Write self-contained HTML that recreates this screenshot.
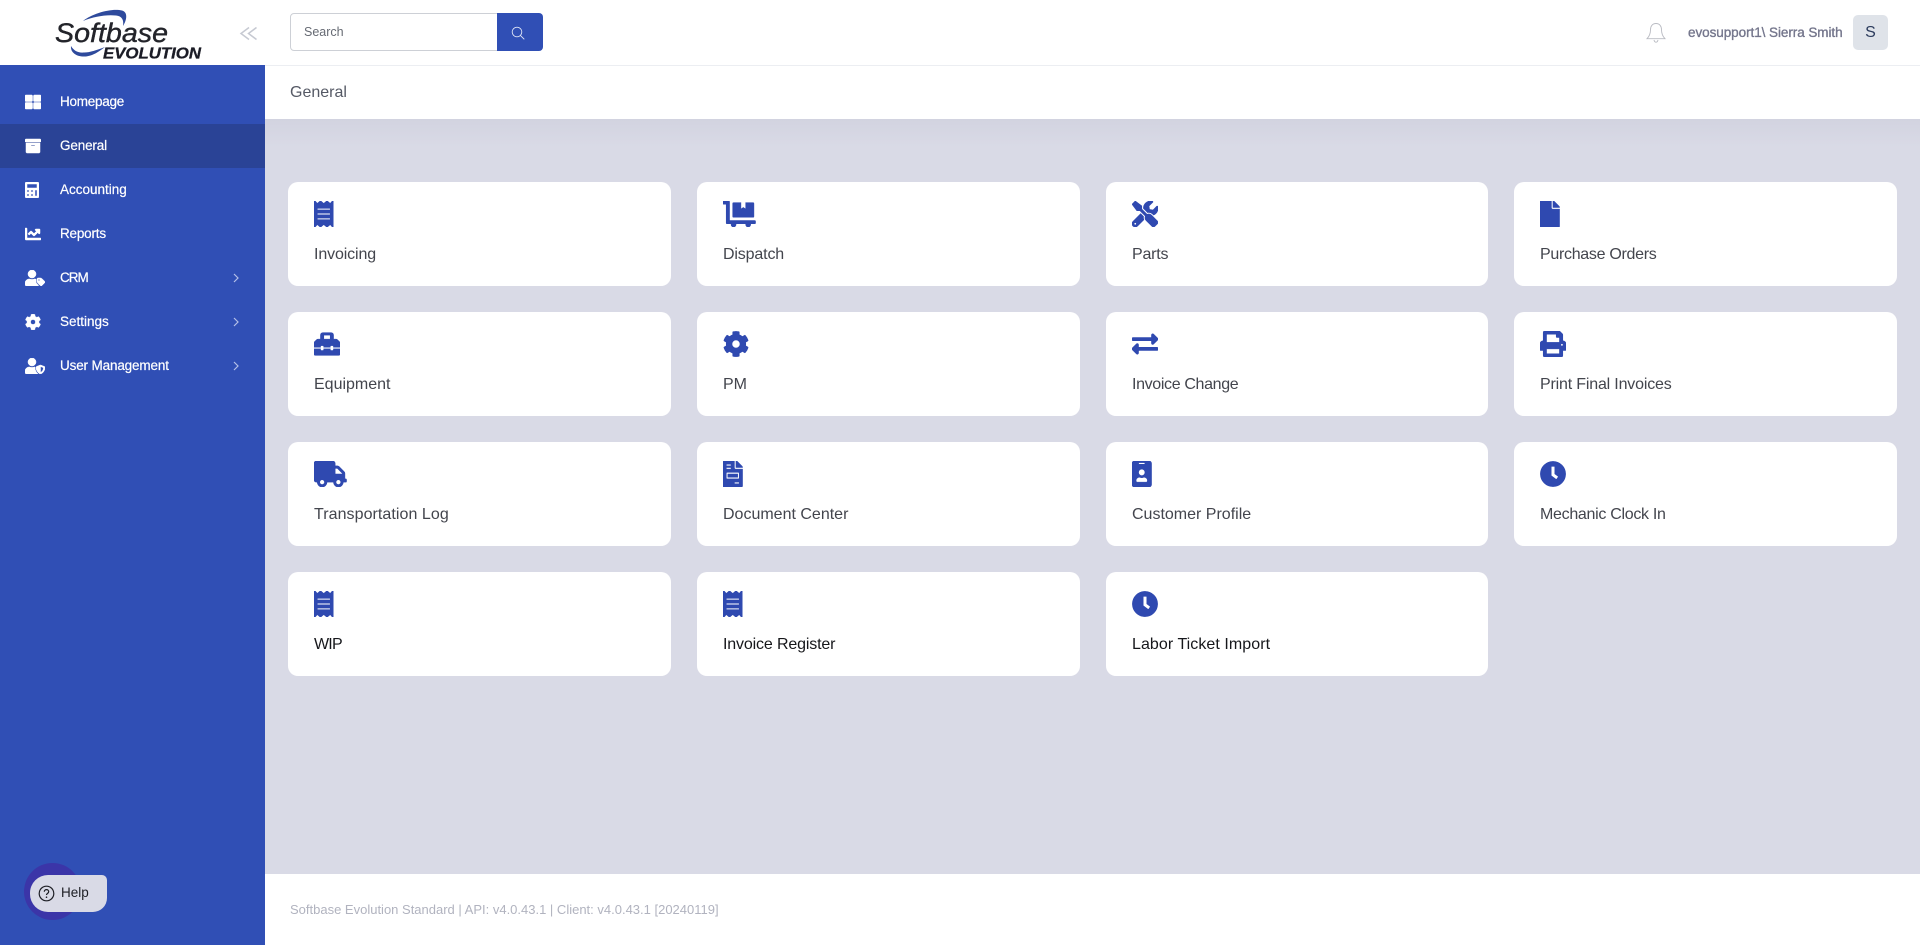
<!DOCTYPE html>
<html lang="en">
<head>
<meta charset="utf-8">
<title>Softbase Evolution - General</title>
<style>
html,body{margin:0;padding:0;width:1920px;height:945px;overflow:hidden;background:#d9dae6;font-family:"Liberation Sans",sans-serif}
*{box-sizing:border-box}
.abs{position:absolute}
#side{position:absolute;left:0;top:65px;width:265px;height:880px;background:#304fb5}
#logo{position:absolute;left:0;top:0;width:265px;height:65px;background:#fff}
#top{position:absolute;left:265px;top:0;width:1655px;height:66px;background:#fff;border-bottom:1px solid #eceef2}
#ph{position:absolute;left:265px;top:66px;width:1655px;height:53px;background:#fff}
#ph span{position:absolute;left:25px;top:17px;font-size:16px;line-height:20px;color:#555965}
#shade{position:absolute;left:265px;top:119px;width:1655px;height:28px;background:linear-gradient(#d2d3e0,#d9dae6)}
#foot{position:absolute;left:265px;top:874px;width:1655px;height:71px;background:#fff}
#foot span{position:absolute;left:25px;top:27px;font-size:13px;line-height:18px;color:#b1b3bf;white-space:nowrap}
.nav{position:absolute;left:0;width:265px;height:44px;color:#fff;font-size:13.5px;line-height:44px}
.nav.on{background:#2a4396}
.nav span{position:absolute;left:60px;top:0;-webkit-text-stroke:.2px #fff}
.nav svg.i{position:absolute;left:25px;top:14px;height:16px;fill:#fff;stroke:#fff;stroke-width:16}
.nav svg.c{position:absolute;left:233px;top:17px;width:6px;height:10px;fill:none;stroke:#b4c0e8;stroke-width:1.2}
.card{position:absolute;width:383px;height:104px;background:#fff;border-radius:10px}
.card svg{position:absolute;left:26px;top:19px;height:26px;fill:#2f49b0;stroke:#2f49b0;stroke-width:12}
.card span{position:absolute;left:26px;top:63px;font-size:16px;line-height:20px;color:#43454d;white-space:nowrap}
.card.d span{color:#16171b}
</style>
</head>
<body>
<svg width="0" height="0" style="position:absolute">
<defs>
<symbol id="receipt" viewBox="0 0 384 512"><path d="M358.4 3.2L320 48 265.6 3.2a15.9 15.9 0 0 0-19.2 0L192 48 137.6 3.2a15.9 15.9 0 0 0-19.2 0L64 48 25.6 3.2C15-4.7 0 2.8 0 16v480c0 13.2 15 20.7 25.6 12.8L64 464l54.4 44.8a15.9 15.9 0 0 0 19.2 0L192 464l54.4 44.8a15.9 15.9 0 0 0 19.2 0L320 464l38.4 44.8c10.5 7.9 25.6.4 25.6-12.8V16c0-13.2-15-20.7-25.6-12.8zM320 360c0 4.4-3.6 8-8 8H72c-4.4 0-8-3.6-8-8v-16c0-4.4 3.6-8 8-8h240c4.4 0 8 3.6 8 8v16zm0-96c0 4.4-3.6 8-8 8H72c-4.4 0-8-3.6-8-8v-16c0-4.4 3.6-8 8-8h240c4.4 0 8 3.6 8 8v16zm0-96c0 4.4-3.6 8-8 8H72c-4.4 0-8-3.6-8-8v-16c0-4.4 3.6-8 8-8h240c4.4 0 8 3.6 8 8v16z"/></symbol>
<symbol id="clock" viewBox="0 0 512 512"><path d="M256 8C119 8 8 119 8 256s111 248 248 248 248-111 248-248S393 8 256 8zm57.1 350.1L224.9 294c-3.1-2.3-4.9-5.9-4.9-9.7V116c0-6.6 5.4-12 12-12h48c6.6 0 12 5.4 12 12v137.7l63.5 46.2c5.4 3.9 6.5 11.4 2.6 16.8l-28.2 38.8c-3.9 5.3-11.4 6.5-16.8 2.6z"/></symbol>
<symbol id="cog" viewBox="0 0 512 512"><path d="M487.4 315.7l-42.6-24.6c4.3-23.2 4.3-47 0-70.2l42.6-24.6c4.9-2.8 7.1-8.6 5.5-14-11.1-35.6-30-67.8-54.7-94.6-3.8-4.1-10-5.1-14.8-2.3L380.8 110c-17.9-15.4-38.5-27.3-60.8-35.1V25.8c0-5.6-3.9-10.5-9.4-11.7-36.7-8.2-74.3-7.8-109.2 0-5.5 1.2-9.4 6.1-9.4 11.7V75c-22.2 7.9-42.8 19.8-60.8 35.1L88.7 85.5c-4.9-2.8-11-1.9-14.8 2.3-24.7 26.7-43.6 58.9-54.7 94.6-1.7 5.4.6 11.2 5.5 14L67.3 221c-4.3 23.2-4.3 47 0 70.2l-42.6 24.6c-4.9 2.8-7.1 8.6-5.5 14 11.1 35.6 30 67.8 54.7 94.6 3.8 4.1 10 5.1 14.8 2.3l42.6-24.6c17.9 15.4 38.5 27.3 60.8 35.1v49.2c0 5.6 3.9 10.5 9.4 11.7 36.7 8.2 74.3 7.8 109.2 0 5.5-1.2 9.4-6.1 9.4-11.7v-49.2c22.2-7.9 42.8-19.8 60.8-35.1l42.6 24.6c4.9 2.8 11 1.9 14.8-2.3 24.7-26.7 43.6-58.9 54.7-94.6 1.5-5.5-.7-11.3-5.6-14.1zM256 336c-44.1 0-80-35.9-80-80s35.9-80 80-80 80 35.9 80 80-35.9 80-80 80z"/></symbol>
</defs>
</svg>

<div id="top"></div>
<div id="ph"><span>General</span></div>
<div id="shade"></div>

<!-- logo -->
<div id="logo">
<svg width="265" height="65" viewBox="0 0 265 65" style="position:absolute;left:0;top:0">
<path d="M83 21C93 13 112 8 122 10.500C128 12 127 20 123 26C124 20 122 16 116 15.500C106 14.500 94 16.500 83 21Z" fill="#2e4a9c"/>
<path d="M71 46C70 55 82 59 92 55C97 53 101 50 105 47C97 50 90 52.500 84 52.500C78 53 74 51 71 46Z" fill="#2e4a9c"/>
<text x="55" y="42" font-family="'Liberation Sans',sans-serif" font-style="italic" font-size="26.500" fill="#23242a" stroke="#23242a" stroke-width=".4" textLength="113" lengthAdjust="spacingAndGlyphs">Softbase</text>
<text x="103" y="58.500" font-family="'Liberation Sans',sans-serif" font-style="italic" font-weight="700" font-size="15.500" fill="#1b1c26" stroke="#1b1c26" stroke-width=".3" textLength="98" lengthAdjust="spacingAndGlyphs">EVOLUTION</text>
<path d="M249 27.500L241 33.500L249 39.500M256.500 27.500L248.500 33.500L256.500 39.500" fill="none" stroke="#c6c9d2" stroke-width="1.500"/>
</svg>
</div>

<!-- sidebar -->
<div id="side"></div>
<div class="nav" style="top:80px"><svg class="i" viewBox="0 0 512 512"><path d="M296 32h192c13.255 0 24 10.745 24 24v160c0 13.255-10.745 24-24 24H296c-13.255 0-24-10.745-24-24V56c0-13.255 10.745-24 24-24zm-80 0H24C10.745 32 0 42.745 0 56v160c0 13.255 10.745 24 24 24h192c13.255 0 24-10.745 24-24V56c0-13.255-10.745-24-24-24zM0 296v160c0 13.255 10.745 24 24 24h192c13.255 0 24-10.745 24-24V296c0-13.255-10.745-24-24-24H24c-13.255 0-24 10.745-24 24zm296 184h192c13.255 0 24-10.745 24-24V296c0-13.255-10.745-24-24-24H296c-13.255 0-24 10.745-24 24v160c0 13.255 10.745 24 24 24z"/></svg><span style="letter-spacing:-.25px">Homepage</span></div>
<div class="nav on" style="top:124px"><svg class="i" viewBox="0 0 512 512"><path d="M32 448c0 17.7 14.3 32 32 32h384c17.7 0 32-14.3 32-32V160H32v288zm160-212c0-6.6 5.4-12 12-12h104c6.6 0 12 5.4 12 12v8c0 6.6-5.4 12-12 12H204c-6.6 0-12-5.4-12-12v-8zM480 32H32C14.3 32 0 46.3 0 64v48c0 8.8 7.2 16 16 16h480c8.8 0 16-7.2 16-16V64c0-17.700-14.300-32-32-32z"/></svg><span style="letter-spacing:-.15px">General</span></div>
<div class="nav" style="top:168px"><svg class="i" viewBox="0 0 448 512"><path d="M400 0H48C22.400 0 0 22.400 0 48v416c0 25.600 22.400 48 48 48h352c25.600 0 48-22.400 48-48V48c0-25.600-22.400-48-48-48zM128 435.200c0 6.400-6.400 12.800-12.800 12.800H76.800c-6.400 0-12.800-6.400-12.800-12.800v-38.400c0-6.400 6.400-12.800 12.800-12.800h38.400c6.400 0 12.800 6.400 12.800 12.800v38.400zm0-128c0 6.400-6.400 12.800-12.800 12.800H76.800c-6.400 0-12.800-6.400-12.800-12.800v-38.400c0-6.400 6.400-12.800 12.800-12.800h38.400c6.400 0 12.800 6.400 12.800 12.800v38.400zm128 128c0 6.400-6.400 12.800-12.800 12.800h-38.400c-6.400 0-12.800-6.400-12.800-12.800v-38.400c0-6.400 6.400-12.800 12.800-12.800h38.400c6.400 0 12.800 6.400 12.800 12.800v38.400zm0-128c0 6.400-6.400 12.800-12.800 12.800h-38.400c-6.400 0-12.800-6.400-12.800-12.800v-38.400c0-6.400 6.400-12.800 12.800-12.800h38.400c6.400 0 12.800 6.400 12.800 12.800v38.400zm128 128c0 6.400-6.400 12.800-12.800 12.800h-38.400c-6.400 0-12.800-6.400-12.800-12.800V268.800c0-6.400 6.400-12.800 12.800-12.800h38.400c6.400 0 12.800 6.400 12.800 12.800v166.400zm0-256c0 6.400-6.400 12.800-12.800 12.800H76.800c-6.400 0-12.800-6.400-12.800-12.800V76.800C64 70.400 70.400 64 76.800 64h294.400c6.400 0 12.800 6.400 12.800 12.800v102.400z"/></svg><span>Accounting</span></div>
<div class="nav" style="top:212px"><svg class="i" viewBox="0 0 512 512"><path d="M496 384H64V80c0-8.840-7.160-16-16-16H16C7.160 64 0 71.160 0 80v336c0 17.670 14.330 32 32 32h464c8.840 0 16-7.160 16-16v-32c0-8.840-7.160-16-16-16zM464 96H345.940c-21.380 0-32.090 25.850-16.970 40.970l32.400 32.400L288 242.750l-73.370-73.370c-12.500-12.500-32.760-12.500-45.250 0l-68.690 68.690c-6.250 6.250-6.250 16.380 0 22.630l22.620 22.620c6.250 6.250 16.380 6.250 22.630 0L192 237.250l73.370 73.370c12.500 12.500 32.760 12.500 45.250 0l96-96 32.400 32.400c15.120 15.120 40.970 4.410 40.970-16.970V112c.01-8.840-7.150-16-15.990-16z"/></svg><span style="letter-spacing:-.2px">Reports</span></div>
<div class="nav" style="top:256px"><svg class="i" viewBox="0 0 640 512"><path d="M630.600 364.900l-90.300-90.200c-12-12-28.300-18.700-45.300-18.700h-79.300c-17.700 0-32 14.300-32 32v79.200c0 17 6.700 33.200 18.700 45.200l90.300 90.200c12.500 12.500 32.800 12.500 45.300 0l92.500-92.500c12.600-12.500 12.600-32.700.1-45.200zm-182.800-21c-13.300 0-24-10.700-24-24s10.700-24 24-24 24 10.700 24 24c0 13.200-10.700 24-24 24zm-223.800-88c70.700 0 128-57.300 128-128C352 57.300 294.700 0 224 0S96 57.300 96 128c0 70.600 57.300 127.900 128 127.900zm127.800 111.200V294c-12.200-3.600-24.900-6.200-38.200-6.200h-16.700c-22.200 10.200-46.900 16-72.900 16s-50.600-5.800-72.900-16h-16.700C60.200 287.900 0 348.100 0 422.300v41.600c0 26.500 21.500 48 48 48h352c15.500 0 29.100-7.500 37.900-18.900l-58-58c-18.100-18.100-28.100-42.200-28.100-67.900z"/></svg><span style="letter-spacing:-1px">CRM</span><svg class="c" viewBox="0 0 6 10"><path d="M1 1l4 4-4 4"/></svg></div>
<div class="nav" style="top:300px"><svg class="i" viewBox="0 0 512 512"><use href="#cog"/></svg><span>Settings</span><svg class="c" viewBox="0 0 6 10"><path d="M1 1l4 4-4 4"/></svg></div>
<div class="nav" style="top:344px"><svg class="i" viewBox="0 0 640 512"><path d="M622.300 271.100l-115.200-45c-4.100-1.600-12.600-3.700-22.200 0l-115.200 45c-10.700 4.200-17.700 14-17.700 24.900 0 111.600 68.700 188.800 132.900 213.900 9.600 3.700 18 1.600 22.200 0C558.400 489.900 640 420.500 640 296c0-10.900-7-20.700-17.700-24.900zM496 462.400V273.300l95.500 37.300c-5.600 87.100-60.900 135.400-95.500 151.800zM224 256c70.700 0 128-57.300 128-128S294.700 0 224 0 96 57.300 96 128s57.300 128 128 128zm96 40c0-2.500.8-4.700 1.100-7.200-2.500-.1-4.900-.8-7.500-.8h-16.700c-22.200 10.200-46.900 16-72.900 16s-50.600-5.800-72.900-16h-16.700C60.200 288 0 348.200 0 422.400V464c0 26.500 21.500 48 48 48h352c6.800 0 13.300-1.500 19.200-4-54-42.900-99.200-116.700-99.200-212z"/></svg><span style="letter-spacing:-.15px">User Management</span><svg class="c" viewBox="0 0 6 10"><path d="M1 1l4 4-4 4"/></svg></div>

<!-- help -->
<div class="abs" style="left:24px;top:863px;width:57px;height:57px;border-radius:50%;background:#3b35a8"></div>
<div class="abs" style="left:30px;top:875px;width:77px;height:37px;background:#d9dae6;border-radius:18px 5px 14px 18px"></div>
<svg class="abs" style="left:38px;top:885px" width="17" height="17" viewBox="0 0 17 17"><circle cx="8.500" cy="8.500" r="7.300" fill="none" stroke="#1d1e24" stroke-width="1.200"/><path d="M6.300 6.700c0-1.300 1-2.100 2.200-2.100s2.200.8 2.200 2c0 1.800-2.200 1.700-2.200 3.400" fill="none" stroke="#1d1e24" stroke-width="1.200"/><circle cx="8.500" cy="12.200" r=".8" fill="#1d1e24"/></svg>
<div class="abs" style="left:61px;top:883px;font-size:13.500px;line-height:20px;color:#1d1e24">Help</div>

<!-- search -->
<div class="abs" style="left:290px;top:13px;width:208px;height:38px;background:#fff;border:1px solid #cdd0d6;border-radius:4px 0 0 4px"></div>
<div class="abs" style="left:304px;top:23px;font-size:12.500px;line-height:18px;color:#666a73">Search</div>
<div class="abs" style="left:497px;top:13px;width:46px;height:38px;background:#304fb5;border-radius:0 4px 4px 0"></div>
<svg class="abs" style="left:511px;top:26px" width="14" height="14" viewBox="0 0 14 14" fill="none" stroke="#dfe5f6" stroke-width=".9"><circle cx="6" cy="6" r="4.800"/><path d="M9.400 9.400l3.900 3.900"/></svg>

<!-- user -->
<svg class="abs" style="left:1646px;top:22px" width="20" height="22" viewBox="0 0 20 22" fill="none" stroke="#b9bbc2" stroke-width=".9"><path d="M10 1.500c-3.600 0-5.500 2.700-5.500 6.200 0 4.500-1.300 6.700-3.500 9h18c-2.200-2.300-3.500-4.500-3.500-9C15.500 4.200 13.600 1.500 10 1.500z"/><path d="M8 18c.3 1.400 1 2.200 2 2.200s1.700-.8 2-2.200"/></svg>
<div class="abs" style="left:1688px;top:23px;font-size:13.500px;line-height:20px;color:#74768c;white-space:nowrap;letter-spacing:-.06px;-webkit-text-stroke:.35px #74768c">evosupport1\ Sierra Smith</div>
<div class="abs" style="left:1853px;top:15px;width:35px;height:35px;background:#dfe3e9;border-radius:5px;text-align:center;font-size:16px;line-height:35px;color:#2b3b5c">S</div>

<!-- cards -->
<div class="card" style="left:288px;top:182px"><svg viewBox="0 0 384 512"><use href="#receipt"/></svg><span style="letter-spacing:-.13px">Invoicing</span></div>
<div class="card" style="left:697px;top:182px"><svg viewBox="0 0 640 512"><path d="M208 320h384c8.800 0 16-7.200 16-16V48c0-8.800-7.200-16-16-16H448v128l-48-32-48 32V32H208c-8.800 0-16 7.200-16 16v256c0 8.800 7.200 16 16 16zm416 64H128V16c0-8.800-7.200-16-16-16H16C7.200 0 0 7.200 0 16v32c0 8.800 7.200 16 16 16h48v368c0 8.800 7.200 16 16 16h82.900c-1.800 5-2.900 10.400-2.900 16 0 26.500 21.500 48 48 48s48-21.500 48-48c0-5.600-1.200-11-2.900-16H451c-1.800 5-2.900 10.400-2.900 16 0 26.500 21.500 48 48 48s48-21.500 48-48c0-5.600-1.200-11-2.900-16H624c8.800 0 16-7.200 16-16v-32c0-8.800-7.200-16-16-16z"/></svg><span style="letter-spacing:-.15px">Dispatch</span></div>
<div class="card" style="left:1106px;top:182px;width:382px"><svg viewBox="0 0 512 512"><path d="M501.100 395.700L384 278.600c-23.100-23.100-57.600-27.600-85.400-13.900L192 158.100V96L64 0 0 64l96 128h62.100l106.600 106.600c-13.600 27.800-9.200 62.300 13.900 85.400l117.100 117.100c14.600 14.600 38.200 14.600 52.700 0l52.700-52.700c14.500-14.600 14.500-38.200 0-52.700zM331.700 225c28.300 0 54.900 11 74.900 31l19.400 19.400c15.800-6.900 30.800-16.500 43.800-29.500 37.100-37.100 49.700-89.300 37.900-136.700-2.200-9-13.500-12.100-20.100-5.500l-74.400 74.400-67.900-11.300L334 98.900l74.400-74.400c6.600-6.600 3.400-17.900-5.700-20.200-47.400-11.700-99.600.9-136.600 37.900-28.500 28.500-41.900 66.100-41.200 103.600l82.100 82.100c8.100-1.900 16.500-2.900 24.700-2.900zm-103.900 82l-56.700-56.700L18.700 402.800c-25 25-25 65.500 0 90.500s65.500 25 90.500 0l123.600-123.600c-7.600-19.900-9.900-41.600-5-62.700zM64 472c-13.200 0-24-10.800-24-24 0-13.300 10.700-24 24-24s24 10.700 24 24c0 13.200-10.700 24-24 24z"/></svg><span style="letter-spacing:-.2px">Parts</span></div>
<div class="card" style="left:1514px;top:182px"><svg viewBox="0 0 384 512"><path d="M224 136V0H12C5 0 0 5 0 12v488c0 7 5 12 12 12h360c7 0 12-5 12-12V160H248c-13.200 0-24-10.800-24-24zm160-14.100v6.100H256V0h6.100c6.400 0 12.500 2.500 17 7l97.900 98c4.500 4.500 7 10.600 7 16.900z"/></svg><span style="letter-spacing:-.3px">Purchase Orders</span></div>

<div class="card" style="left:288px;top:312px"><svg viewBox="0 0 512 512"><path d="M502.630 214.630l-45.250-45.250c-6-6-14.140-9.370-22.630-9.370H384V80c0-26.510-21.490-48-48-48H176c-26.510 0-48 21.490-48 48v80H77.250c-8.490 0-16.620 3.370-22.630 9.370L9.370 214.630c-6 6-9.370 14.140-9.370 22.630V320h128v-16c0-8.840 7.160-16 16-16h32c8.840 0 16 7.160 16 16v16h128v-16c0-8.840 7.160-16 16-16h32c8.840 0 16 7.160 16 16v16h128v-82.750c0-8.480-3.370-16.620-9.370-22.620zM320 160H192V80h128v80zm64 208c0 8.840-7.160 16-16 16h-32c-8.840 0-16-7.160-16-16v-16H192v16c0 8.840-7.160 16-16 16h-32c-8.840 0-16-7.160-16-16v-16H0v96c0 17.670 14.330 32 32 32h448c17.670 0 32-14.330 32-32v-96H384v16z"/></svg><span>Equipment</span></div>
<div class="card" style="left:697px;top:312px"><svg viewBox="0 0 512 512"><use href="#cog"/></svg><span>PM</span></div>
<div class="card" style="left:1106px;top:312px;width:382px"><svg viewBox="0 0 512 512"><path d="M0 168v-16c0-13.255 10.745-24 24-24h360V80c0-21.367 25.899-32.042 40.971-16.971l80 80c9.372 9.373 9.372 24.569 0 33.941l-80 80C409.956 271.982 384 261.456 384 240v-48H24c-13.255 0-24-10.745-24-24zm488 152H128v-48c0-21.314-25.862-32.080-40.971-16.971l-80 80c-9.372 9.373-9.372 24.569 0 33.941l80 80C102.057 463.997 128 453.437 128 432v-48h360c13.255 0 24-10.745 24-24v-16c0-13.255-10.745-24-24-24z"/></svg><span style="letter-spacing:-.35px">Invoice Change</span></div>
<div class="card" style="left:1514px;top:312px"><svg viewBox="0 0 512 512"><path d="M448 192V77.250c0-8.490-3.370-16.620-9.370-22.630L393.370 9.370c-6-6-14.140-9.370-22.630-9.370H96C78.330 0 64 14.330 64 32v160c-35.350 0-64 28.650-64 64v112c0 8.840 7.160 16 16 16h48v96c0 17.670 14.330 32 32 32h320c17.670 0 32-14.330 32-32v-96h48c8.840 0 16-7.160 16-16V256c0-35.350-28.650-64-64-64zm-64 256H128v-96h256v96zm0-224H128V64h192v48c0 8.840 7.160 16 16 16h48v96zm48 72c-13.250 0-24-10.750-24-24 0-13.260 10.750-24 24-24s24 10.740 24 24c0 13.250-10.750 24-24 24z"/></svg><span style="letter-spacing:-.18px">Print Final Invoices</span></div>

<div class="card" style="left:288px;top:442px"><svg viewBox="0 0 640 512"><path d="M624 352h-16V243.900c0-12.700-5.100-24.900-14.100-33.900L494 110.100c-9-9-21.200-14.100-33.900-14.100H416V48c0-26.500-21.500-48-48-48H48C21.500 0 0 21.500 0 48v320c0 26.500 21.500 48 48 48h16c0 53 43 96 96 96s96-43 96-96h128c0 53 43 96 96 96s96-43 96-96h48c8.800 0 16-7.200 16-16v-32c0-8.800-7.200-16-16-16zM160 464c-26.500 0-48-21.500-48-48s21.500-48 48-48 48 21.500 48 48-21.500 48-48 48zm320 0c-26.500 0-48-21.500-48-48s21.500-48 48-48 48 21.500 48 48-21.500 48-48 48zm80-208H416V144h44.100l99.900 99.900V256z"/></svg><span style="letter-spacing:.06px">Transportation Log</span></div>
<div class="card" style="left:697px;top:442px"><svg viewBox="0 0 384 512"><path d="M288 256H96v64h192v-64zm89-151L279.100 7c-4.500-4.500-10.600-7-17-7H256v128h128v-6.100c0-6.300-2.500-12.400-7-16.900zm-153 31V0H24C10.700 0 0 10.700 0 24v464c0 13.300 10.700 24 24 24h336c13.300 0 24-10.700 24-24V160H248c-13.200 0-24-10.800-24-24zM64 72c0-4.420 3.580-8 8-8h80c4.420 0 8 3.580 8 8v16c0 4.420-3.580 8-8 8H72c-4.420 0-8-3.580-8-8V72zm0 64c0-4.420 3.580-8 8-8h80c4.420 0 8 3.580 8 8v16c0 4.420-3.580 8-8 8H72c-4.420 0-8-3.580-8-8v-16zm256 304c0 4.420-3.580 8-8 8h-80c-4.420 0-8-3.580-8-8v-16c0-4.420 3.580-8 8-8h80c4.420 0 8 3.580 8 8v16zm0-200v96c0 8.840-7.160 16-16 16H80c-8.840 0-16-7.160-16-16v-96c0-8.840 7.160-16 16-16h224c8.840 0 16 7.160 16 16z"/></svg><span>Document Center</span></div>
<div class="card" style="left:1106px;top:442px;width:382px"><svg viewBox="0 0 384 512"><path d="M336 0H48C21.500 0 0 21.500 0 48v416c0 26.500 21.500 48 48 48h288c26.500 0 48-21.500 48-48V48c0-26.500-21.500-48-48-48zM144 32h96c8.800 0 16 7.200 16 16s-7.200 16-16 16h-96c-8.800 0-16-7.200-16-16s7.200-16 16-16zm48 128c35.300 0 64 28.700 64 64s-28.700 64-64 64-64-28.700-64-64 28.700-64 64-64zm112 236.800c0 10.600-10 19.200-22.400 19.200H102.400C90 416 80 407.400 80 396.800v-19.200c0-31.800 30.100-57.600 67.200-57.600h5c12.300 5.100 25.700 8 39.800 8s27.600-2.900 39.800-8h5c37.100 0 67.200 25.800 67.200 57.600v19.200z"/></svg><span>Customer Profile</span></div>
<div class="card" style="left:1514px;top:442px"><svg viewBox="0 0 512 512"><use href="#clock"/></svg><span style="letter-spacing:-.3px">Mechanic Clock In</span></div>

<div class="card d" style="left:288px;top:572px"><svg viewBox="0 0 384 512"><use href="#receipt"/></svg><span style="letter-spacing:-.8px">WIP</span></div>
<div class="card d" style="left:697px;top:572px"><svg viewBox="0 0 384 512"><use href="#receipt"/></svg><span style="letter-spacing:-.15px">Invoice Register</span></div>
<div class="card d" style="left:1106px;top:572px;width:382px"><svg viewBox="0 0 512 512"><use href="#clock"/></svg><span style="letter-spacing:.06px">Labor Ticket Import</span></div>

<div id="foot"><span>Softbase Evolution Standard | API: v4.0.43.1 | Client: v4.0.43.1 [20240119]</span></div>
</body>
</html>
